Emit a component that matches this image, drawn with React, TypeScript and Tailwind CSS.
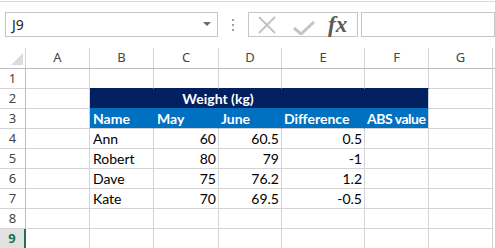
import React from "react";

const COLS = [
  { l: "A", w: 64 },
  { l: "B", w: 64 },
  { l: "C", w: 65 },
  { l: "D", w: 63 },
  { l: "E", w: 83 },
  { l: "F", w: 64 },
  { l: "G", w: 64 },
];

const DATA: [string, string, string, string][] = [
  ["Ann", "60", "60.5", "0.5"],
  ["Robert", "80", "79", "-1"],
  ["Dave", "75", "76.2", "1.2"],
  ["Kate", "70", "69.5", "-0.5"],
];

const cellFont = { fontFamily: "Lato, 'Liberation Sans', sans-serif" };
const uiFont = { fontFamily: "'Noto Sans', 'Open Sans', sans-serif" };

function RowHeader({ n, selected }: { n: number; selected?: boolean }) {
  if (selected) {
    return (
      <div
        className="w-[26px] h-full shrink-0 flex items-center justify-center bg-[#e1e1e1] border-b border-[#d4d4d4] border-r-2 border-r-[#217346] text-[13px] font-bold text-[#217346]"
        style={uiFont}
      >
        {n}
      </div>
    );
  }
  return (
    <div
      className="w-[26px] h-full shrink-0 flex items-center justify-center border-b border-[#d4d4d4] border-r border-r-[#bdbdbd] text-[13px] text-[#444]"
      style={uiFont}
    >
      {n}
    </div>
  );
}

function Cell({ w, className = "", children }: { w: number; className?: string; children?: React.ReactNode }) {
  return (
    <div
      className={`h-full shrink-0 border-r border-b border-[#d4d4d4] flex items-center overflow-hidden whitespace-nowrap text-[14px] text-black ${className}`}
      style={{ width: w, ...cellFont }}
    >
      {children}
    </div>
  );
}

function EmptyRow({ n, selected, className = "" }: { n: number; selected?: boolean; className?: string }) {
  return (
    <div className="flex h-[20px]">
      <RowHeader n={n} selected={selected} />
      {COLS.map((c) => (
        <Cell key={c.l} w={c.w} className={className} />
      ))}
    </div>
  );
}

export default function App() {
  return (
    <div className="w-[495px] h-[248px] bg-white overflow-hidden select-none">
      {/* formula bar */}
      <div className="h-[47px] border-t border-[#d9d9d9] mt-[1px]">
        <div className="flex items-start pt-[10px]">
          <div className="ml-[5px] w-[213px] h-[25px] border border-[#c6c6c6] flex items-center justify-between pl-[6px] pr-[6px]">
            <span className="text-[14px] text-[#222]" style={uiFont}>J9</span>
            <svg width="8" height="5" viewBox="0 0 8 5">
              <path d="M0 0 L8 0 L4 4 Z" fill="#6a6a6a" />
            </svg>
          </div>
          <div className="w-[30px] h-[25px] flex flex-col items-center justify-center gap-[3px]">
            <div className="w-[2px] h-[2px] bg-[#a0a0a0]" />
            <div className="w-[2px] h-[2px] bg-[#a0a0a0]" />
            <div className="w-[2px] h-[2px] bg-[#a0a0a0]" />
          </div>
          <div className="w-[110px] h-[25px] border border-[#c6c6c6] flex items-center">
            <svg width="20" height="18" viewBox="0 0 20 18" className="ml-[8px]">
              <path d="M2 1 L18 17 M18 1 L2 17" stroke="#c4c4c4" strokeWidth="2" fill="none" />
            </svg>
            <svg width="22" height="14" viewBox="0 0 22 14" className="ml-[16px] mt-[6px]">
              <path d="M1 7 L8 13 L21 1" stroke="#c4c4c4" strokeWidth="3" fill="none" />
            </svg>
            <span
              className="ml-[13px] text-[23px] font-bold italic text-[#5a5a5a] leading-none"
              style={{ fontFamily: "'Liberation Serif', serif" }}
            >
              fx
            </span>
          </div>
          <div className="ml-[3px] flex-1 h-[25px] border border-[#c6c6c6]" />
        </div>
      </div>

      {/* column headers */}
      <div className="flex h-[21px] border-b border-[#bdbdbd]">
        <div className="w-[26px] h-full shrink-0 border-r border-[#d4d4d4] relative">
          <svg width="12" height="12" viewBox="0 0 12 12" className="absolute left-[11px] top-[5px]">
            <path d="M12 0 L12 12 L0 12 Z" fill="#dcdcdc" />
          </svg>
        </div>
        {COLS.map((c) => (
          <div
            key={c.l}
            className="h-full shrink-0 border-r border-[#d4d4d4] flex items-center justify-center text-[13px] text-[#444]"
            style={{ width: c.w, ...uiFont }}
          >
            {c.l}
          </div>
        ))}
      </div>

      {/* row 1 */}
      <div className="flex h-[20px]">
        <RowHeader n={1} />
        <Cell w={64} />
        <Cell w={64} className="border-b-[#002060]" />
        <Cell w={65} className="border-b-[#002060]" />
        <Cell w={63} className="border-b-[#002060]" />
        <Cell w={83} className="border-b-[#002060]" />
        <Cell w={64} className="border-b-[#002060]" />
        <Cell w={64} />
      </div>

      {/* row 2 */}
      <div className="flex h-[20px]">
        <RowHeader n={2} />
        <Cell w={64} />
        <Cell
          w={339}
          className="bg-[#002060] border-b-[#0070c0] justify-center pr-[82px] font-bold text-white"
        >
          <span className="text-white">Weight (kg)</span>
        </Cell>
        <Cell w={64} />
      </div>

      {/* row 3 */}
      <div className="flex h-[20px]">
        <RowHeader n={3} />
        <Cell w={64} />
        <Cell w={64} className="bg-[#0070c0] border-r-[#0070c0] pl-[3px] font-bold text-white">
          <span className="text-white">Name</span>
        </Cell>
        <Cell w={65} className="bg-[#0070c0] border-r-[#0070c0] pl-[3px] font-bold">
          <span className="text-white">May</span>
        </Cell>
        <Cell w={63} className="bg-[#0070c0] border-r-[#0070c0] pl-[2px] font-bold">
          <span className="text-white">June</span>
        </Cell>
        <Cell w={83} className="bg-[#0070c0] border-r-[#0070c0] pl-[2px] font-bold">
          <span className="text-white">Difference</span>
        </Cell>
        <Cell w={64} className="bg-[#0070c0] pl-[2px] font-bold tracking-[-0.5px]">
          <span className="text-white">ABS value</span>
        </Cell>
        <Cell w={64} />
      </div>

      {/* data rows */}
      {DATA.map((r, i) => (
        <div key={i} className="flex h-[20px]">
          <RowHeader n={4 + i} />
          <Cell w={64} />
          <Cell w={64} className="pl-[3px]">{r[0]}</Cell>
          <Cell w={65} className="justify-end pr-[2px]">{r[1]}</Cell>
          <Cell w={63} className="justify-end pr-[2px]">{r[2]}</Cell>
          <Cell w={83} className="justify-end pr-[2px]">{r[3]}</Cell>
          <Cell w={64} />
          <Cell w={64} />
        </div>
      ))}

      <EmptyRow n={8} />
      <EmptyRow n={9} selected />
    </div>
  );
}
